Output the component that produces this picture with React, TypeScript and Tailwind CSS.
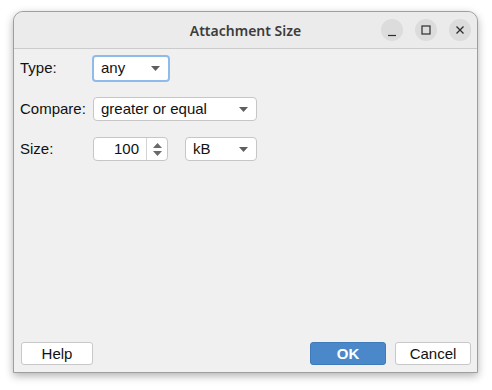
import React from "react";

const sans = { fontFamily: '"Liberation Sans", Arial, sans-serif' };

function DownArrow() {
  return (
    <svg width="9" height="5" viewBox="0 0 9 5" className="shrink-0">
      <path d="M0 0h9L4.5 5z" fill="#5e5e5e" />
    </svg>
  );
}

function Combo({ value, width, focused }: { value: string; width: string; focused?: boolean }) {
  return (
    <div
      className={`${width} flex items-center justify-between bg-white rounded-[4px] pl-[7px] pr-[8px] ${
        focused ? "h-[27px] -ml-px border-2 border-[#8fbbea] pl-[6px]" : "h-[24px] border border-[#c6c6c6]"
      }`}
    >
      <span className="text-[15px] text-[#111]">{value}</span>
      <DownArrow />
    </div>
  );
}

function TitleButton({ children }: { children: React.ReactNode }) {
  return (
    <div className="w-[22px] h-[22px] rounded-full bg-[#dcdcdc] flex items-center justify-center">{children}</div>
  );
}

export default function App() {
  return (
    <div className="w-[492px] h-[390px] bg-white pt-[11px] pl-[13px]" style={sans}>
      <div className="w-[465px] h-[362px] flex flex-col bg-[#f0f0f0] border border-[#9e9e9e] rounded-t-[10px] shadow-[0_3px_8px_rgba(0,0,0,0.3)]">
        {/* title bar */}
        <div className="h-[37px] shrink-0 relative flex items-center justify-end gap-[12px] pr-[6px] bg-[#ebebeb] border-b border-[#cbcbcb] rounded-t-[10px]">
          <div
            className="absolute inset-0 flex items-center justify-center text-[14px] font-semibold text-[#3c3c3c]"
            style={{ fontFamily: '"Noto Sans", "Open Sans", sans-serif' }}
          >
            Attachment Size
          </div>
          <TitleButton>
            <svg width="10" height="10" viewBox="0 0 10 10" className="mt-[3px]">
              <path d="M1 8.5h8" stroke="#2e2e2e" strokeWidth="1.2" />
            </svg>
          </TitleButton>
          <TitleButton>
            <svg width="10" height="10" viewBox="0 0 10 10">
              <rect x="1" y="1" width="8" height="8" fill="none" stroke="#2e2e2e" strokeWidth="1.2" />
            </svg>
          </TitleButton>
          <TitleButton>
            <svg width="10" height="10" viewBox="0 0 10 10">
              <path d="M1.5 1.5l7 7M8.5 1.5l-7 7" stroke="#2e2e2e" strokeWidth="1.3" />
            </svg>
          </TitleButton>
        </div>

        {/* content */}
        <div className="flex-1 flex flex-col pl-[6px] pr-[6px] pt-[6px] pb-[7px] text-[15px] text-[#111]">
          <div className="flex items-center h-[27px]">
            <span className="w-[73px]">Type:</span>
            <Combo value="any" width="w-[78px]" focused />
          </div>
          <div className="flex items-center h-[24px] mt-[15px]">
            <span className="w-[73px]">Compare:</span>
            <Combo value="greater or equal" width="w-[164px]" />
          </div>
          <div className="flex items-center h-[24px] mt-[16px]">
            <span className="w-[73px]">Size:</span>
            <div className="w-[75px] h-[24px] flex bg-white border border-[#c6c6c6] rounded-[4px]">
              <div className="flex-1 flex items-center justify-end pr-[7px]">100</div>
              <div className="w-[21px] border-l border-[#d4d4d4] flex flex-col items-center justify-center gap-[3px]">
                <svg width="9" height="5" viewBox="0 0 9 5">
                  <path d="M0 5h9L4.5 0z" fill="#6a6a6a" />
                </svg>
                <svg width="9" height="5" viewBox="0 0 9 5">
                  <path d="M0 0h9L4.5 5z" fill="#6a6a6a" />
                </svg>
              </div>
            </div>
            <div className="ml-[17px]">
              <Combo value="kB" width="w-[72px]" />
            </div>
          </div>

          <div className="flex-1" />

          <div className="flex items-center h-[23px]">
            <button className="w-[72px] h-[23px] ml-px bg-white border border-[#c8c8c8] rounded-[3px] text-[15px] text-[#111]">
              Help
            </button>
            <div className="flex-1" />
            <button className="w-[76px] h-[23px] bg-[#4a88c9] border border-[#3f7bb9] rounded-[3px] text-[15px] font-bold text-white">
              OK
            </button>
            <button className="w-[76px] h-[23px] ml-[9px] bg-white border border-[#c8c8c8] rounded-[3px] text-[15px] text-[#111]">
              Cancel
            </button>
          </div>
        </div>
      </div>
    </div>
  );
}
